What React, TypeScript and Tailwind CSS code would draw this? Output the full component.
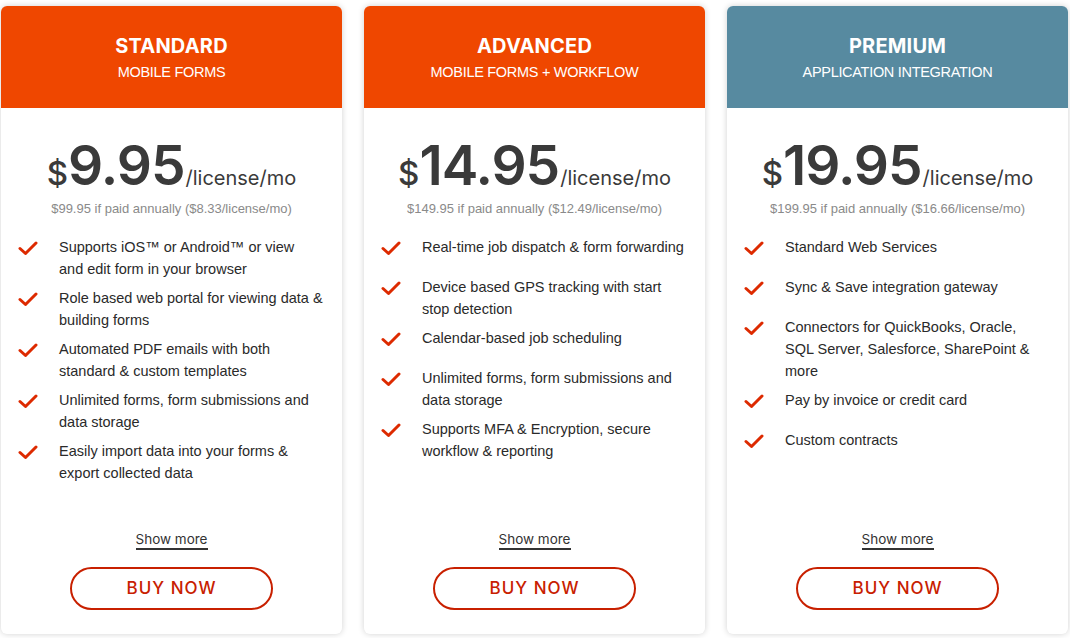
import React from "react";

type Plan = {
  name: string;
  sub: string;
  color: string;
  price: string;
  annual: string;
  features: string[][];
};

const plans: Plan[] = [
  {
    name: "STANDARD",
    sub: "MOBILE FORMS",
    color: "bg-[#ef4700]",
    price: "9.95",
    annual: "$99.95 if paid annually ($8.33/license/mo)",
    features: [
      ["Supports iOS™ or Android™ or view", "and edit form in your browser"],
      ["Role based web portal for viewing data &", "building forms"],
      ["Automated PDF emails with both", "standard & custom templates"],
      ["Unlimited forms, form submissions and", "data storage"],
      ["Easily import data into your forms &", "export collected data"],
    ],
  },
  {
    name: "ADVANCED",
    sub: "MOBILE FORMS + WORKFLOW",
    color: "bg-[#ef4700]",
    price: "14.95",
    annual: "$149.95 if paid annually ($12.49/license/mo)",
    features: [
      ["Real-time job dispatch & form forwarding"],
      ["Device based GPS tracking with start", "stop detection"],
      ["Calendar-based job scheduling"],
      ["Unlimited forms, form submissions and", "data storage"],
      ["Supports MFA & Encryption, secure", "workflow & reporting"],
    ],
  },
  {
    name: "PREMIUM",
    sub: "APPLICATION INTEGRATION",
    color: "bg-[#578aa0]",
    price: "19.95",
    annual: "$199.95 if paid annually ($16.66/license/mo)",
    features: [
      ["Standard Web Services"],
      ["Sync & Save integration gateway"],
      ["Connectors for QuickBooks, Oracle,", "SQL Server, Salesforce, SharePoint &", "more"],
      ["Pay by invoice or credit card"],
      ["Custom contracts"],
    ],
  },
];

function Check() {
  return (
    <svg width="20" height="16" viewBox="0 0 20 16" className="shrink-0 mt-[4px]">
      <path d="M2 8.5 L7.5 13.5 L18 3" fill="none" stroke="#dd2a00" strokeWidth="3" strokeLinecap="round" strokeLinejoin="round" />
    </svg>
  );
}

function Card({ p }: { p: Plan }) {
  return (
    <div className="w-[341px] h-[628px] flex flex-col rounded-[6px] bg-white shadow-[0_0_6px_rgba(0,0,0,0.18)] overflow-hidden">
      <div className={`${p.color} h-[102px] flex flex-col items-center pt-[28px] text-white`}>
        <div className="font-['Inter',sans-serif] font-bold text-[20px] leading-[24px] tracking-[0.2px]">{p.name}</div>
        <div className="font-['Liberation_Sans',Arial,sans-serif] text-[14.5px] leading-[18px] mt-[5px] tracking-[-0.3px]">{p.sub}</div>
      </div>
      <div className="flex flex-col items-center pt-[27px]">
        <div className="flex items-baseline text-[#3a3a3a] font-['Inter',sans-serif]">
          <span className="text-[33px] leading-none font-medium">$</span>
          <span className="text-[55px] leading-[60px] font-semibold tracking-[-1px]">{p.price}</span>
          <span className="text-[20px] leading-none ml-[1px]">/license/mo</span>
        </div>
        <div className="mt-[4px] text-[13px] text-[#8a8a8a] font-['Liberation_Sans',Arial,sans-serif]">{p.annual}</div>
      </div>
      <ul className="mt-[17px] pl-[17px] pr-[8px] flex flex-col gap-[7px] font-['Liberation_Sans',Arial,sans-serif] text-[14.5px] leading-[22px] text-[#2a2a2a]">
        {p.features.map((f, i) => (
          <li key={i} className="flex min-h-[33px]">
            <Check />
            <span className="ml-[21px] whitespace-nowrap">
              {f.map((line, j) => (
                <span key={j} className="block">{line}</span>
              ))}
            </span>
          </li>
        ))}
      </ul>
      <div className="mt-auto flex flex-col items-center pb-[24px]">
        <span className="font-['Inter',sans-serif] text-[13.5px] text-[#333] leading-[18px] border-b-2 border-[#333]">Show more</span>
        <button className="mt-[17px] w-[203px] h-[43px] rounded-full border-2 border-[#c82000] text-[#c82000] font-['Inter',sans-serif] font-medium text-[17px] tracking-[1px]">
          BUY NOW
        </button>
      </div>
    </div>
  );
}

export default function App() {
  return (
    <div className="w-[1070px] h-[638px] bg-white flex gap-[22px] pl-[1px] pt-[6px]">
      {plans.map((p) => (
        <Card key={p.name} p={p} />
      ))}
    </div>
  );
}
